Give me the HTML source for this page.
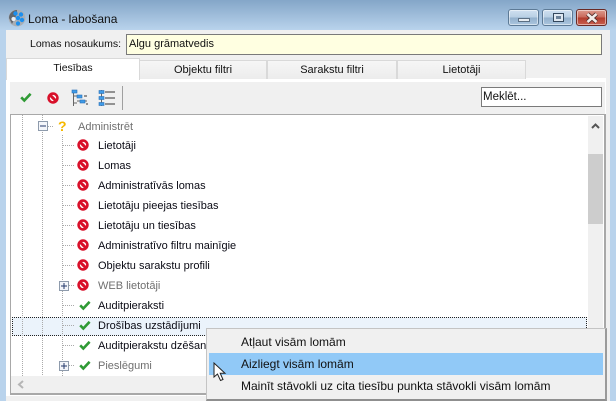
<!DOCTYPE html>
<html><head><meta charset="utf-8">
<style>
html,body{margin:0;padding:0;width:616px;height:401px;overflow:hidden;background:#b9d3ec}
*{box-sizing:border-box}
body{font-family:"Liberation Sans","DejaVu Sans",sans-serif;font-size:11px;color:#000;position:relative}
.a{position:absolute}
.t{position:absolute;white-space:nowrap;line-height:14px;font-size:11px;color:#0a0a14}
.tab{position:absolute;top:60px;height:19px;background:linear-gradient(#f6f6f6,#ececec);border:1px solid #d9d9d9;border-bottom:none;text-align:center;line-height:19px;font-size:11px;color:#111}
svg{position:absolute;display:block}
.wb{position:absolute;top:9px;height:17px;border:1px solid #5d7a96;border-radius:3px;box-shadow:inset 0 0 0 1px rgba(255,255,255,.5);background:linear-gradient(#cfe0f0 0,#b9cfe4 48%,#93b0cc 52%,#abc6df 100%)}
.v{position:absolute;width:1px;background-image:linear-gradient(#aaa 50%,transparent 50%);background-size:1px 2px}
.h{position:absolute;height:1px;width:11px;background-image:linear-gradient(90deg,#aaa 50%,transparent 50%);background-size:2px 1px}
.m{position:absolute;left:241px;font-size:12px;line-height:16px;white-space:nowrap;color:#111}
</style></head><body>
<svg width="0" height="0" style="position:absolute"><defs>
<g id="no"><circle cx="7" cy="7" r="4.4" fill="#fff" stroke="#d8102a" stroke-width="2.6"/><path d="M3.6 3.6L10.4 10.4" stroke="#d8102a" stroke-width="3"/></g>
<g id="ok"><path d="M2.2 7.3L5.3 10.5L11.6 3.8" fill="none" stroke="#2f9a35" stroke-width="2.6"/></g>
<g id="plus"><rect x=".5" y=".5" width="9" height="9" fill="#f4f6fa" stroke="#8e9bac"/><path d="M2 5H8M5 2V8" stroke="#23386b"/></g>
</defs></svg>

<div class="a" style="left:0;top:0;width:616px;height:30px;background:linear-gradient(#84a6c8,#b9d3ec)"></div>
<div class="a" style="left:0;top:30px;width:6px;height:371px;background:#b9d3ec"></div>
<div class="a" style="left:610px;top:30px;width:6px;height:371px;background:#b9d3ec"></div>
<div class="a" style="left:6px;top:30px;width:604px;height:371px;background:#f0f0f0"></div>

<svg style="left:8px;top:9px" width="18" height="18" viewBox="0 0 18 18"><circle cx="9" cy="9" r="8.4" fill="#a9aeb4"/><path d="M1 9a8 8 0 0 1 8-8v4L4 15z" fill="#62676d"/><circle cx="7.5" cy="4.5" r="2.2" fill="#1c8fee"/><circle cx="13" cy="5.5" r="2.2" fill="#1c8fee"/><circle cx="10" cy="9" r="2.2" fill="#1c8fee"/><circle cx="5.5" cy="10" r="2.1" fill="#e8eef5"/><circle cx="14" cy="11" r="2.2" fill="#1c8fee"/><circle cx="10" cy="14.5" r="2.1" fill="#1c8fee"/></svg>
<div class="t" style="left:28px;top:11px;font-size:12px;line-height:16px;color:#111">Loma - labošana</div>

<div class="wb" style="left:508px;width:31px"><div class="a" style="left:9px;top:8px;width:12px;height:4px;background:#e8edf2;border:1px solid #5c6f83"></div></div>
<div class="wb" style="left:542px;width:31px"><div class="a" style="left:10px;top:3px;width:11px;height:9px;border:1px solid #33475c;background:#dfe8f1"><div class="a" style="left:2px;top:2px;width:5px;height:3px;background:#6c8299"></div></div></div>
<div class="wb" style="left:576px;width:31px;border-color:#6a2a25;background:linear-gradient(#dc9a8e 0,#c9685a 48%,#b23b2d 52%,#c9604f 100%)"><svg style="left:8px;top:2px" width="14" height="12" viewBox="0 0 14 12"><path d="M2.5 2L11.5 10M11.5 2L2.5 10" stroke="#4d2a28" stroke-width="4.2"/><path d="M2.5 2L11.5 10M11.5 2L2.5 10" stroke="#f2ece9" stroke-width="2.6"/></svg></div>

<div class="t" style="left:30px;top:37px;font-size:10.5px;color:#111">Lomas nosaukums:</div>
<div class="a" style="left:126px;top:34px;width:476px;height:21px;background:#ffffe1;border:1px solid #7a7a7a"></div>
<div class="t" style="left:129px;top:37px;color:#111">Algu grāmatvedis</div>

<div class="a" style="left:6px;top:78px;width:600px;height:318px;background:#fff"></div>
<div class="tab" style="left:139px;width:128px">Objektu filtri</div>
<div class="tab" style="left:267px;width:130px">Sarakstu filtri</div>
<div class="tab" style="left:397px;width:129px">Lietotāji</div>
<div class="tab" style="left:6px;top:58px;width:134px;height:22px;background:#fff;border-bottom:none;line-height:19px;z-index:2;font-size:10.5px">Tiesības</div>

<div class="a" style="left:10px;top:82px;width:595px;height:32px;background:#f0f0f0"></div>
<svg style="left:19px;top:90px" width="14" height="14"><use href="#ok"/></svg>
<svg style="left:46px;top:91px" width="14" height="14"><use href="#no"/></svg>
<svg style="left:71px;top:88px" width="18" height="19" viewBox="0 0 18 19"><path d="M2.5 3V18M2.5 8H6M2.5 15H6M6 13H16" stroke="#666" fill="none"/><rect x="1" y="2" width="5" height="3" fill="#3f9be8" stroke="#2a6fb5" stroke-width=".6"/><rect x="6" y="7" width="5" height="3" fill="#3f9be8" stroke="#2a6fb5" stroke-width=".6"/><rect x="9" y="12" width="5" height="3" fill="#3f9be8" stroke="#2a6fb5" stroke-width=".6"/><path d="M13 8h3M15 16h2" stroke="#333"/></svg>
<svg style="left:98px;top:89px" width="18" height="18" viewBox="0 0 18 18"><path d="M3.5 1V17" stroke="#666"/><path d="M7 3H17M7 9H17M7 15H17" stroke="#333"/><rect x="1" y="1.5" width="5" height="3" fill="#3f9be8" stroke="#2a6fb5" stroke-width=".6"/><rect x="1" y="7.5" width="5" height="3" fill="#3f9be8" stroke="#2a6fb5" stroke-width=".6"/><rect x="1" y="13.5" width="5" height="3" fill="#3f9be8" stroke="#2a6fb5" stroke-width=".6"/></svg>
<div class="a" style="left:122px;top:86px;width:1px;height:24px;background:#a0a0a0"></div>
<div class="a" style="left:481px;top:87px;width:121px;height:20px;background:#fff;border:1px solid #7a7a7a"></div>
<div class="t" style="left:483px;top:90px;font-size:11.5px;color:#111">Meklēt...</div>

<div class="a" style="left:10px;top:114px;width:596px;height:281px;background:#fff;border:1px solid #a8a8a8;border-width:1px 2px 2px 1px"></div>
<div class="a" style="left:588px;top:116px;width:15px;height:260px;background:#f0f0f0"></div>
<div class="a" style="left:588px;top:154px;width:15px;height:70px;background:#cdcdcd"></div>
<svg style="left:591px;top:122px" width="9" height="7" viewBox="0 0 9 7"><path d="M1 6L4.5 2.5L8 6" fill="none" stroke="#555" stroke-width="2"/></svg>
<div class="a" style="left:11px;top:376px;width:592px;height:17px;background:#f0f0f0"></div>
<svg style="left:17px;top:380px" width="8" height="9" viewBox="0 0 8 9"><path d="M6 1L2 4.5L6 8" fill="none" stroke="#b5b5b5" stroke-width="2"/></svg>

<div class="a" style="left:12px;top:317px;width:575px;height:19px;background:#ebf3fb;border:1px dotted #222"></div>

<div class="v" style="left:22px;top:115px;height:261px"></div>
<div class="v" style="left:42px;top:115px;height:6px"></div>
<div class="v" style="left:42px;top:132px;height:244px"></div>
<div class="v" style="left:62px;top:135px;height:241px"></div>

<svg style="left:38px;top:121px" width="10" height="10"><rect x=".5" y=".5" width="9" height="9" fill="#f4f6fa" stroke="#8e9bac"/><path d="M2 5H8" stroke="#23386b"/></svg>
<div class="h" style="left:48px;top:126px;width:5px"></div>
<div class="t" style="left:58px;top:118px;font-size:14px;font-weight:bold;color:#f5b800;line-height:16px">?</div>
<div class="t" style="left:78px;top:120px;color:#6f6f6f">Administrēt</div>

<div class="h" style="left:63px;top:145px"></div><svg style="left:76px;top:138px" width="14" height="14"><use href="#no"/></svg><div class="t" style="left:98px;top:139px">Lietotāji</div>
<div class="h" style="left:63px;top:165px"></div><svg style="left:76px;top:158px" width="14" height="14"><use href="#no"/></svg><div class="t" style="left:98px;top:159px">Lomas</div>
<div class="h" style="left:63px;top:185px"></div><svg style="left:76px;top:178px" width="14" height="14"><use href="#no"/></svg><div class="t" style="left:98px;top:179px">Administratīvās lomas</div>
<div class="h" style="left:63px;top:205px"></div><svg style="left:76px;top:198px" width="14" height="14"><use href="#no"/></svg><div class="t" style="left:98px;top:199px">Lietotāju pieejas tiesības</div>
<div class="h" style="left:63px;top:225px"></div><svg style="left:76px;top:218px" width="14" height="14"><use href="#no"/></svg><div class="t" style="left:98px;top:219px">Lietotāju un tiesības</div>
<div class="h" style="left:63px;top:245px"></div><svg style="left:76px;top:238px" width="14" height="14"><use href="#no"/></svg><div class="t" style="left:98px;top:239px">Administratīvo filtru mainīgie</div>
<div class="h" style="left:63px;top:265px"></div><svg style="left:76px;top:258px" width="14" height="14"><use href="#no"/></svg><div class="t" style="left:98px;top:259px">Objektu sarakstu profili</div>
<svg style="left:59px;top:281px" width="10" height="10"><use href="#plus"/></svg><div class="h" style="left:69px;top:285px;width:5px"></div><svg style="left:76px;top:278px" width="14" height="14"><use href="#no"/></svg><div class="t" style="left:98px;top:279px;color:#6f6f6f">WEB lietotāji</div>
<div class="h" style="left:63px;top:305px"></div><svg style="left:78px;top:298px" width="14" height="14"><use href="#ok"/></svg><div class="t" style="left:98px;top:299px">Auditpieraksti</div>
<div class="h" style="left:63px;top:325px"></div><svg style="left:78px;top:318px" width="14" height="14"><use href="#ok"/></svg><div class="t" style="left:98px;top:319px">Drošības uzstādījumi</div>
<div class="h" style="left:63px;top:345px"></div><svg style="left:78px;top:338px" width="14" height="14"><use href="#ok"/></svg><div class="t" style="left:98px;top:339px">Auditpierakstu dzēšana</div>
<svg style="left:59px;top:361px" width="10" height="10"><use href="#plus"/></svg><div class="h" style="left:69px;top:365px;width:5px"></div><svg style="left:78px;top:358px" width="14" height="14"><use href="#ok"/></svg><div class="t" style="left:98px;top:359px;color:#6f6f6f">Pieslēgumi</div>

<div class="a" style="left:206px;top:328px;width:401px;height:73px;background:#f0f0f0;border:1px solid #c4c4c4;border-right:2px solid #9a9a9a;border-bottom:2px solid #8f8f8f"></div>
<div class="a" style="left:209px;top:353px;width:394px;height:22px;background:#91c9f7"></div>
<div class="m" style="top:334px">Atļaut visām lomām</div>
<div class="m" style="top:356px">Aizliegt visām lomām</div>
<div class="m" style="top:378px">Mainīt stāvokli uz cita tiesību punkta stāvokli visām lomām</div>
<svg style="left:213px;top:362px" width="16" height="20" viewBox="0 0 16 20"><path d="M1 1V15L4.5 12L7.5 18.5L10 17.5L7.2 11.2H12Z" fill="#fff" stroke="#222" stroke-width="1"/></svg>
</body></html>
